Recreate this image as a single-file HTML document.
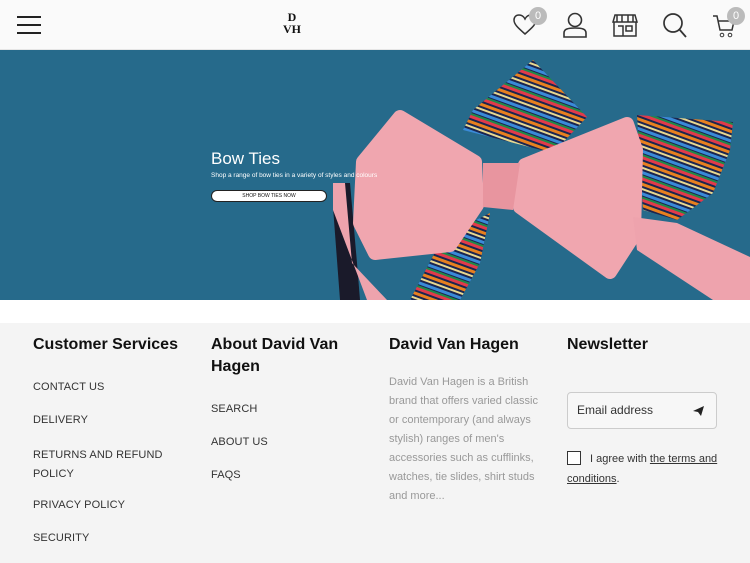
<!DOCTYPE html>
<html><head><meta charset="utf-8"><style>
*{margin:0;padding:0;box-sizing:border-box}
body{width:750px;height:563px;overflow:hidden;background:#f4f4f4;font-family:"Liberation Sans",sans-serif;color:#222;position:relative}
.hdr{position:absolute;left:0;top:0;width:750px;height:50px;background:#fafafa;border-bottom:1px solid #e6e6e6}
.ban{position:absolute;left:0;top:50px;width:750px;height:250px;background:#266a8b;overflow:hidden}
.gap{position:absolute;left:0;top:300px;width:750px;height:23px;background:#fff}
.col{position:absolute;top:334px}
h3{font-size:16px;font-weight:bold;line-height:22px;color:#111}
.lk{position:absolute;font-size:11px;color:#333;letter-spacing:.1px}
.badge{position:absolute;width:18px;height:18px;border-radius:50%;background:#bbb;color:#fff;font-size:11px;text-align:center;line-height:18px}
.pk{fill:#f0a6af;stroke:#f0a6af;stroke-width:14;stroke-linejoin:round}
</style></head><body>
<div class="hdr">
<svg style="position:absolute;left:17px;top:15px" width="24" height="20"><path d="M0 2H24M0 10H24M0 18H24" stroke="#222" stroke-width="2"/></svg>
<div style="position:absolute;left:280px;top:11px;font-family:'Liberation Serif',serif;font-weight:bold;font-size:12px;line-height:12px;text-align:center;width:24px;color:#111">D<br>VH</div>
<svg style="position:absolute;left:513px;top:14px" width="24" height="22"><path d="M12 20C4 13 1 10 1 6C1 3 3 1 6 1C9 1 11 3 12 5C13 3 15 1 18 1C21 1 23 3 23 6C23 10 20 13 12 20Z" fill="none" stroke="#333" stroke-width="1.5"/></svg>
<div class="badge" style="left:529px;top:7px">0</div>
<svg style="position:absolute;left:562px;top:12px" width="26" height="26"><circle cx="13" cy="8" r="6.5" fill="none" stroke="#333" stroke-width="1.6"/><path d="M2 25V21C2 17 6 16 13 16C20 16 24 17 24 21V25Z" fill="none" stroke="#333" stroke-width="1.6"/></svg>
<svg style="position:absolute;left:612px;top:13px" width="26" height="24"><path d="M3 2H23L25 9H1Z M2 9V23H24V9 M6 13H11V23 M14 13H20V18H14Z M5 2V9 M10 2V9 M16 2V9 M21 2V9" fill="none" stroke="#333" stroke-width="1.5"/></svg>
<svg style="position:absolute;left:662px;top:12px" width="26" height="26"><circle cx="11" cy="11" r="9" fill="none" stroke="#333" stroke-width="1.7"/><path d="M17 17L24 25" stroke="#333" stroke-width="1.8"/></svg>
<svg style="position:absolute;left:712px;top:14px" width="24" height="24"><path d="M1 2H5L8 16H20L22 7H6" fill="none" stroke="#333" stroke-width="1.5"/><circle cx="10" cy="21" r="1.8" fill="none" stroke="#333"/><circle cx="18" cy="21" r="1.8" fill="none" stroke="#333"/></svg>
<div class="badge" style="left:727px;top:7px">0</div>
</div>
<div class="ban">
<svg width="750" height="250" style="position:absolute;left:0;top:0">
<defs><pattern id="st" width="20" height="20" patternUnits="userSpaceOnUse" patternTransform="rotate(20)"><rect width="20" height="20" fill="#1a2550"/><rect y="0" width="20" height="3" fill="#e23a4a"/><rect y="5" width="20" height="3" fill="#e8801f"/><rect y="10" width="20" height="2" fill="#e8d890"/><rect y="14" width="20" height="3" fill="#3a8ad8"/><rect y="18" width="20" height="2" fill="#1f8a4a"/></pattern></defs>
<path d="M533 10L587 67L553 103L463 80L473 60Z" fill="url(#st)" stroke-linejoin="round"/>
<path d="M637 65L733 72L730 100L713 143L677 170L643 160Z" fill="url(#st)"/>
<path d="M443 187L490 163L480 213L460 250L410 250Z" fill="url(#st)"/>
<path d="M333 133L350 133L357 213L360 250L340 250L333 157Z" fill="#1a1a2a"/>
<path d="M333 133L345 133L352 213L387 250L367 250L333 160Z" fill="#eea3ad"/>
<path class="pk" d="M400 67L475 112L477 155L450 195L375 203L360 173L363 112Z"/>
<path class="pk" d="M525 115L627 74L636 100L634 185L610 222L520 157Z"/>
<path d="M633 167L677 173L750 207L750 250L713 250L637 200Z" fill="#eea3ad"/>
<path d="M483 113L520 113L513 160L483 157Z" fill="#e8959f"/>
</svg>
<div style="position:absolute;left:211px;top:99px;font-size:17px;color:#fff">Bow Ties</div>
<div style="position:absolute;left:211px;top:122px;font-size:6.5px;color:#fff">Shop a range of bow ties in a variety of styles and colours</div>
<div style="position:absolute;left:211px;top:140px;width:116px;height:12px;background:#fff;border:1px solid #222;border-radius:6px;font-size:5px;text-align:center;line-height:10px;color:#111">SHOP BOW TIES NOW</div>
</div>
<div class="gap"></div>
<div class="col" style="left:33px"><h3>Customer Services</h3></div>
<div class="lk" style="left:33px;top:381px">CONTACT US</div>
<div class="lk" style="left:33px;top:414px">DELIVERY</div>
<div class="lk" style="left:33px;top:446px;line-height:19px">RETURNS AND REFUND<br>POLICY</div>
<div class="lk" style="left:33px;top:499px">PRIVACY POLICY</div>
<div class="lk" style="left:33px;top:532px">SECURITY</div>
<div class="col" style="left:211px;width:150px"><h3>About David Van Hagen</h3></div>
<div class="lk" style="left:211px;top:403px">SEARCH</div>
<div class="lk" style="left:211px;top:436px">ABOUT US</div>
<div class="lk" style="left:211px;top:469px">FAQS</div>
<div class="col" style="left:389px"><h3>David Van Hagen</h3></div>
<div style="position:absolute;left:389px;top:373px;width:160px;font-size:11px;line-height:19px;color:#999">David Van Hagen is a British brand that offers varied classic or contemporary (and always stylish) ranges of men's accessories such as cufflinks, watches, tie slides, shirt studs and more...</div>
<div class="col" style="left:567px"><h3>Newsletter</h3></div>
<div style="position:absolute;left:567px;top:392px;width:150px;height:37px;border:1px solid #ccc;border-radius:4px;background:#f7f7f7;font-size:12px;line-height:35px;padding-left:9px;color:#333">Email address
<svg style="position:absolute;right:12px;top:13px" width="11" height="10"><path d="M0 5L11 0L8 10L5 6Z" fill="#222"/></svg></div>
<div style="position:absolute;left:567px;top:451px;width:14px;height:14px;border:1px solid #333;background:#fff"></div>
<div style="position:absolute;left:567px;top:449px;width:160px;font-size:11px;line-height:20px;color:#333;text-indent:23px">I agree with <u>the terms and conditions</u>.</div>
</body></html>
